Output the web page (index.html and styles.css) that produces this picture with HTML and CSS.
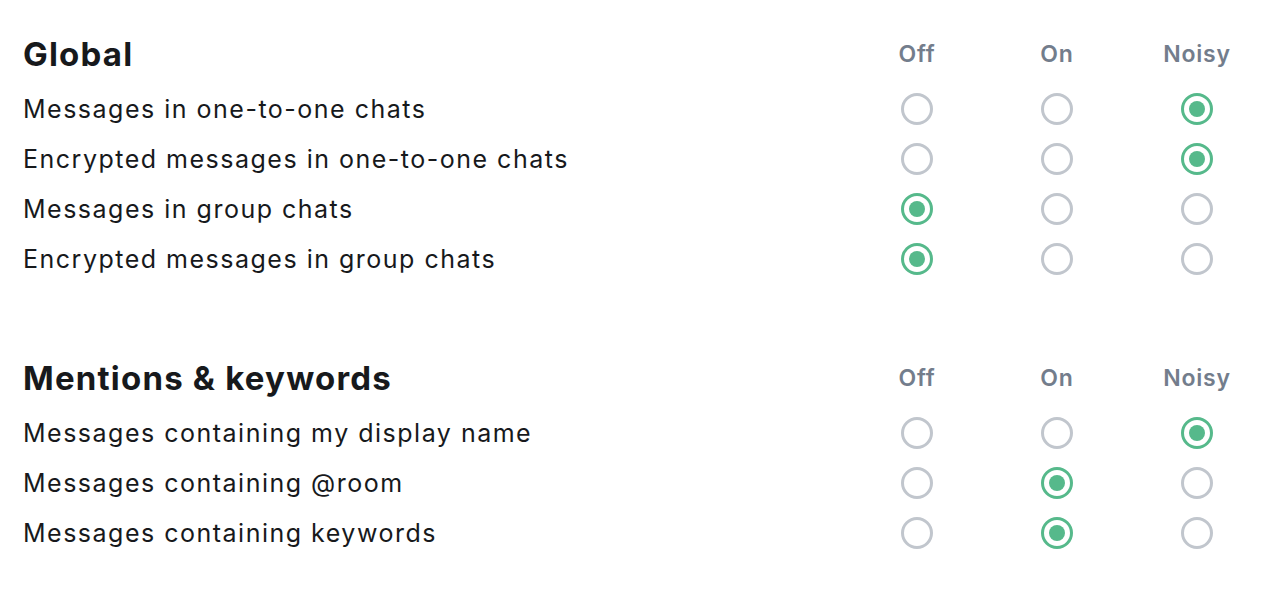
FILE: index.html
```html
<!DOCTYPE html>
<html lang="en">
<head>
<meta charset="utf-8">
<title>Notifications</title>
<link rel="stylesheet" href="styles.css">
</head>
<body>
<div class="page">
  <section class="section">
    <div class="row head">
      <h2 class="title">Global</h2>
      <span class="col">Off</span>
      <span class="col">On</span>
      <span class="col">Noisy</span>
    </div>
    <div class="row">
      <span class="label">Messages in one-to-one chats</span>
      <span class="cell"><span class="radio"></span></span>
      <span class="cell"><span class="radio"></span></span>
      <span class="cell"><span class="radio on"></span></span>
    </div>
    <div class="row">
      <span class="label">Encrypted messages in one-to-one chats</span>
      <span class="cell"><span class="radio"></span></span>
      <span class="cell"><span class="radio"></span></span>
      <span class="cell"><span class="radio on"></span></span>
    </div>
    <div class="row">
      <span class="label">Messages in group chats</span>
      <span class="cell"><span class="radio on"></span></span>
      <span class="cell"><span class="radio"></span></span>
      <span class="cell"><span class="radio"></span></span>
    </div>
    <div class="row">
      <span class="label">Encrypted messages in group chats</span>
      <span class="cell"><span class="radio on"></span></span>
      <span class="cell"><span class="radio"></span></span>
      <span class="cell"><span class="radio"></span></span>
    </div>
  </section>
  <section class="section">
    <div class="row head">
      <h2 class="title">Mentions &amp; keywords</h2>
      <span class="col">Off</span>
      <span class="col">On</span>
      <span class="col">Noisy</span>
    </div>
    <div class="row">
      <span class="label">Messages containing my display name</span>
      <span class="cell"><span class="radio"></span></span>
      <span class="cell"><span class="radio"></span></span>
      <span class="cell"><span class="radio on"></span></span>
    </div>
    <div class="row">
      <span class="label">Messages containing @room</span>
      <span class="cell"><span class="radio"></span></span>
      <span class="cell"><span class="radio on"></span></span>
      <span class="cell"><span class="radio"></span></span>
    </div>
    <div class="row">
      <span class="label">Messages containing keywords</span>
      <span class="cell"><span class="radio"></span></span>
      <span class="cell"><span class="radio on"></span></span>
      <span class="cell"><span class="radio"></span></span>
    </div>
  </section>
</div>
</body>
</html>
```

FILE: styles.css
```css
html, body {
  margin: 0;
  padding: 0;
  background: #ffffff;
}
body {
  font-family: Inter, "Noto Sans", sans-serif;
  color: #17191c;
}
.page {
  padding: 29px 7px 0 23px;
  display: flex;
  flex-direction: column;
  gap: 69px;
}
.section {
  display: flex;
  flex-direction: column;
}
.row {
  display: grid;
  grid-template-columns: 1fr 120px 120px 120px;
  column-gap: 20px;
  align-items: center;
  height: 50px;
}
.row.head {
  margin-bottom: 5px;
}
.title {
  margin: 0;
  font-size: 33px;
  font-weight: 700;
  line-height: 40px;
  letter-spacing: 1.2px;
  color: #17191c;
}
.col {
  text-align: center;
  font-size: 23px;
  font-weight: 600;
  letter-spacing: 0.8px;
  color: #737d8c;
}
.label {
  font-size: 25px;
  line-height: 30px;
  letter-spacing: 1.5px;
  color: #17191c;
}
.cell {
  display: flex;
  justify-content: center;
  align-items: center;
}
.radio {
  box-sizing: border-box;
  width: 32px;
  height: 32px;
  border-radius: 50%;
  border: 3px solid #c1c6cd;
  display: flex;
  align-items: center;
  justify-content: center;
}
.radio.on {
  border-color: #56b98b;
}
.radio.on::after {
  content: "";
  width: 16px;
  height: 16px;
  border-radius: 50%;
  background: #56b98b;
}
```
